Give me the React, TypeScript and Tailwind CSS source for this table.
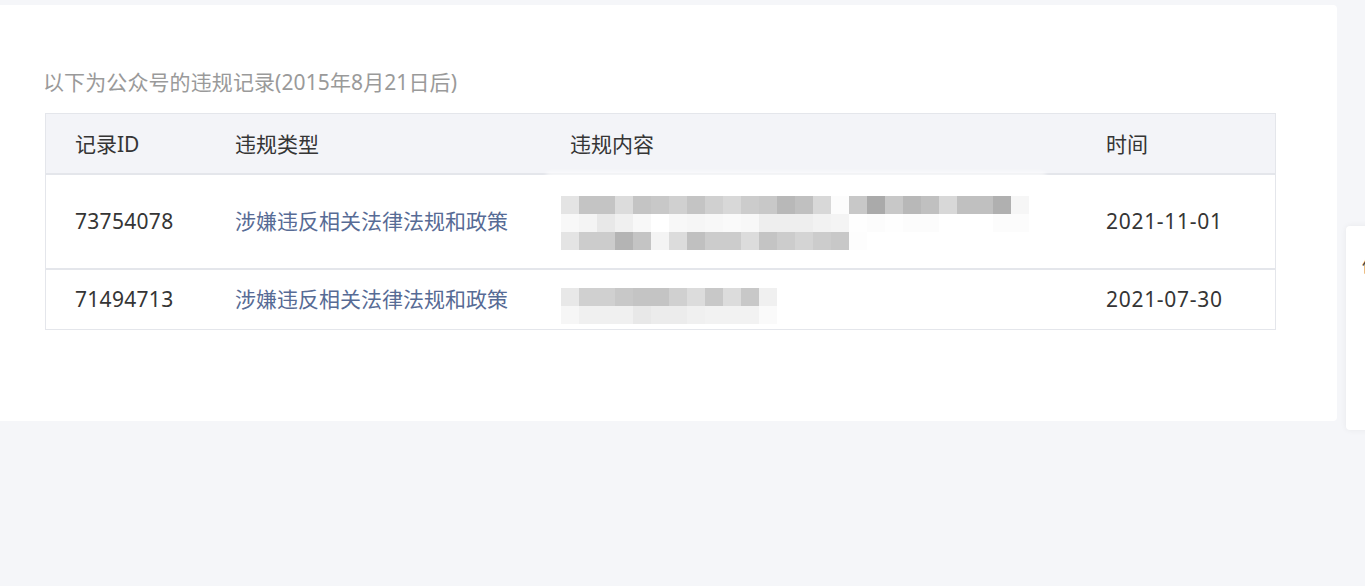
const font = { fontFamily: '"Noto Sans", "Noto Sans CJK SC", sans-serif' };

const mosaic1 = [
  ["e4", "c4", "c4", "dc", "c4", "c8", "d0", "c4", "d0", "d8", "cc", "c8", "b8", "c0", "d8", "fc", "c8", "aa", "c8", "b8", "c0", "d8", "c0", "c0", "b0", "f6"],
  ["f8", "f4", "e8", "f0", "f8", "ff", "f8", "f6", "f8", "fa", "f8", "ee", "ee", "ee", "f2", "f4", "fe", "fc", "fe", "fc", "fc", "ff", "ff", "ff", "fc", "fc"],
  ["e4", "cc", "cc", "b4", "c4", "f4", "dc", "c0", "cc", "cc", "dc", "c4", "cc", "d4", "cc", "c8", "fd"],
];

const mosaic2 = [
  ["e8", "d0", "d0", "c8", "c4", "c4", "d0", "dc", "c8", "dc", "c8", "f0"],
  ["f6", "f0", "f0", "f0", "e8", "ec", "ec", "f0", "f2", "f2", "f2", "fa"],
];

const Mosaic: React.FC<{ rows: string[][] }> = ({ rows }) => (
  <div className="flex flex-col">
    {rows.map((row, i) => (
      <div key={i} className="flex">
        {row.map((c, j) => (
          <div key={j} className="w-[18px] h-[18px]" style={{ backgroundColor: `#${c}${c}${c}` }} />
        ))}
      </div>
    ))}
  </div>
);

const rows = [
  { id: "73754078", date: "2021-11-01", h: "h-[95px]", mosaic: mosaic1, pad: "pt-[2px]" },
  { id: "71494713", date: "2021-07-30", h: "h-[59px]", mosaic: mosaic2, pad: "pt-[12px]" },
];

export default function App() {
  return (
    <div className="w-[1365px] h-[586px] bg-[#f5f6f9] pt-[5px] flex gap-[9px] overflow-hidden" style={font}>
      <div className="w-[1337px] h-[416px] shrink-0 bg-white rounded-r-[4px] pl-[45px] pt-[63px]">
        <p className="text-[21px] leading-[28px] text-[#9a9a9a] -ml-[2px] tracking-[0.1px]">
          以下为公众号的违规记录(2015年8月21日后)
        </p>
        <div className="relative mt-[17px] w-[1231px] border border-[#e4e6eb] text-[21px] text-[#353535]">
          <div className="grid grid-cols-[159px_335px_536px_199px] h-[61px] pt-[3px] bg-[#f3f4f8] border-b-2 border-[#e4e6eb] items-center">
            <div className="pl-[29px]">记录ID</div>
            <div className="pl-[30px]">违规类型</div>
            <div className="pl-[30px]">违规内容</div>
            <div className="pl-[30px]">时间</div>
          </div>
          {rows.map((r, i) => (
            <div
              key={r.id}
              className={`grid grid-cols-[159px_335px_536px_199px] ${r.h} items-center ${i === 0 ? "border-b-2 border-[#e4e6eb]" : ""}`}
            >
              <div className="pl-[29px] tracking-[0.3px]">{r.id}</div>
              <div className="pl-[30px] text-[#576b95]">涉嫌违反相关法律法规和政策</div>
              <div className={`pl-[21px] ${r.pad}`}>
                <Mosaic rows={r.mosaic} />
              </div>
              <div className="pl-[30px] tracking-[0.7px]">{r.date}</div>
            </div>
          ))}
          <div className="absolute left-[500px] top-[58px] w-[500px] h-[6px] rounded-full bg-white/70 blur-[2px]" />
        </div>
      </div>
      <div className="w-[300px] h-[204px] shrink-0 mt-[221px] bg-white rounded-[4px] shadow-[0_0_6px_rgba(0,0,0,0.06)] pl-[16px] pt-[28px]">
        <span className="text-[16px] text-[#444]">信息</span>
      </div>
    </div>
  );
}
